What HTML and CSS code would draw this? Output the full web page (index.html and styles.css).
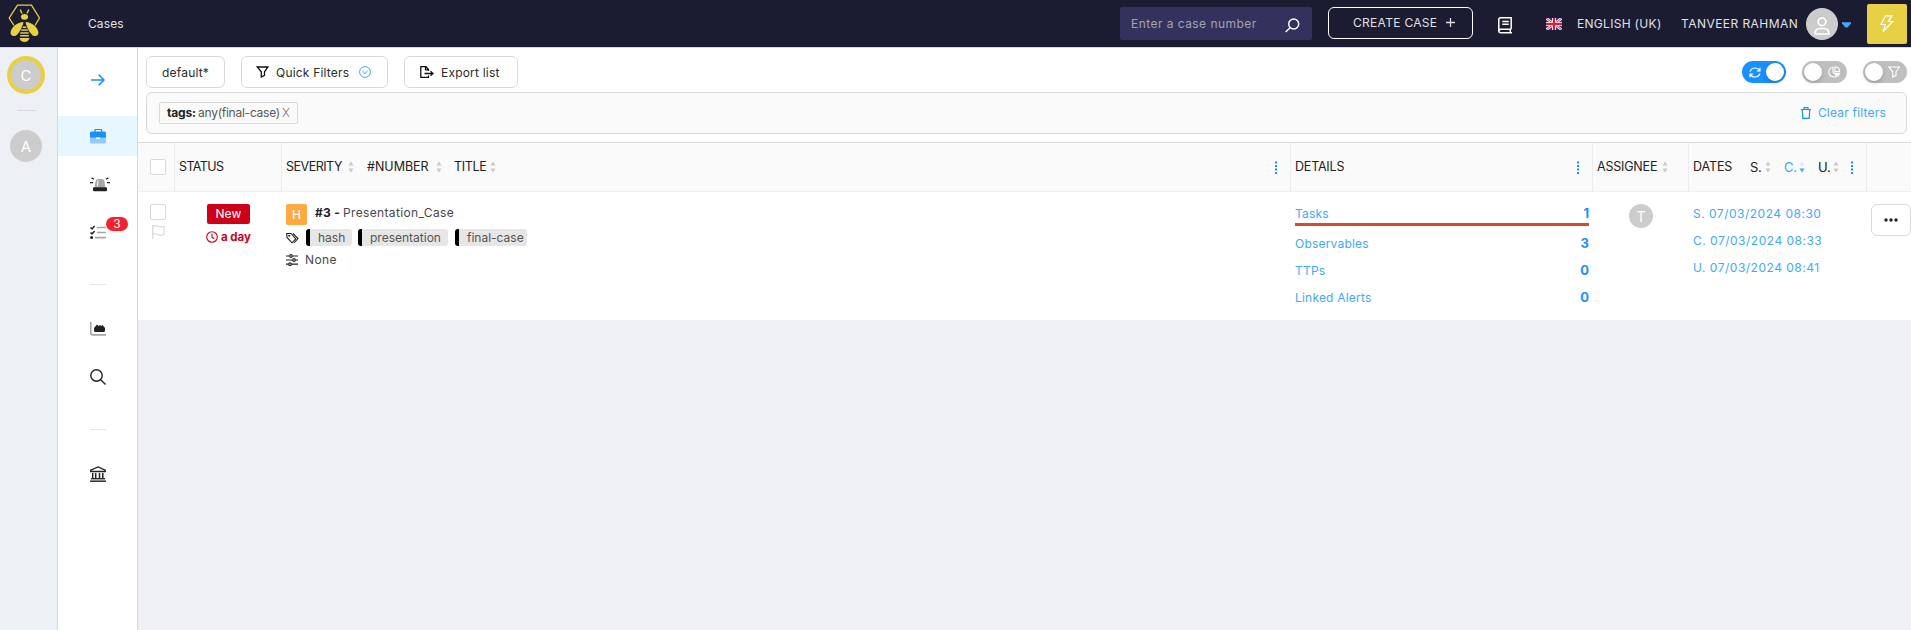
FILE: index.html
```
<!DOCTYPE html>
<html lang="en">
<head>
<meta charset="utf-8">
<title>Cases</title>
<link rel="stylesheet" href="styles.css">
</head>
<body>
<svg class="defs" width="0" height="0">
  <symbol id="sorter" viewBox="0 0 6 12"><path d="M3 0.5 5.500 4.500H.5Z"/><path d="M3 11.500 5.500 7.500H.5Z"/></symbol>
  <symbol id="sorter-desc" viewBox="0 0 6 12"><path d="M3 0.5 5.500 4.500H.5Z" fill="#d5eaff"/><path d="M3 11.500 5.500 7.500H.5Z"/></symbol>
  <symbol id="more" viewBox="0 0 2 14"><path d="M0 .5h2v2H0zM0 4h2v2H0zM0 7.500h2v2H0zM0 11h2v2H0z"/></symbol>
  <symbol id="funnel" viewBox="0 0 12 12"><path d="M.7 1h10.600L8 5.800v3.500L4.800 11V5.800Z"/></symbol>
</svg>
<header class="topbar">
  <svg class="logo" viewBox="0 0 34 40">
    <path d="M6 21.500 1.200 14 9.500 1.200H23.500L31.500 14 27 21.500" fill="none" stroke="#e8d044" stroke-width="1.300"/>
    <path d="M12.200 5.500 14 9.500M20.800 5.500 19 9.500" fill="none" stroke="#e8d044" stroke-width="1.400"/>
    <g fill="#e8d044">
      <ellipse cx="16.500" cy="12.800" rx="3.600" ry="2.900"/>
      <path d="M15.500 18C9 18.500 3.500 23 2.600 28 2 31.500 5.500 33.200 8.500 31.200 11.500 28.500 14.500 23 15.500 18ZM17.500 18C24 18.500 29.500 23 30.400 28 31 31.500 27.500 33.200 24.500 31.200 21.500 28.500 18.500 23 17.500 18Z"/>
      <path d="M15 22.500h3l.5 1.400h-4zM13.600 25.300h5.800l.8 1.500h-7.400zM12.300 28.300h8.400v1.500h-8.400zM12 31.100h9l-.3 1.400h-8.400zM11.500 34h10C20.800 36.500 19 38 16.500 38S12.200 36.500 11.500 34Z"/>
    </g>
  </svg>
  <span class="page-name">Cases</span>
  <div class="case-search"><span>Enter a case number</span>
    <svg width="15" height="15" viewBox="0 0 15 15" fill="none" stroke="#fff" stroke-width="1.400"><circle cx="8.700" cy="6" r="5"/><path d="M5 9.700.7 14"/></svg>
  </div>
  <button class="create"><span>CREATE CASE</span><svg width="9" height="9" viewBox="0 0 9 9" stroke="#ddd" stroke-width="1.300"><path d="M4.500 0v9M0 4.500h9"/></svg></button>
  <svg class="book" width="14" height="17" viewBox="0 0 14 17" fill="none" stroke="#fff" stroke-width="1.500"><path d="M13.200 12.200V.8H2.600Q.8.800.8 2.600V14Q.8 15.700 2.600 15.700H14M1 14q0-1.800 1.800-1.800H13.200M12.300 12.200v3.500M4.300 4.400h6.500M4.300 7.300h6.500"/></svg>
  <svg class="uk" width="16" height="12" viewBox="0 0 16 12"><path fill="#26347c" d="M0 0h16v12H0z"/><path d="M0 0 16 12M16 0 0 12" stroke="#fff" stroke-width="2.600"/><path d="M0 0 16 12M16 0 0 12" stroke="#d6203a" stroke-width="1"/><path d="M8 0v12M0 6h16" stroke="#fff" stroke-width="4"/><path d="M8 0v12M0 6h16" stroke="#d6203a" stroke-width="2.300"/></svg>
  <span class="language">ENGLISH (UK)</span>
  <span class="user">TANVEER RAHMAN</span>
  <span class="avatar"><svg width="16" height="18" viewBox="0 0 16 18" fill="none" stroke="#fff" stroke-width="1.700"><circle cx="8" cy="4.800" r="3.800"/><path d="M1 17q0-5.500 5-5.500h4q5 0 5 5.500Z"/></svg></span>
  <svg class="caret" width="9" height="6" viewBox="0 0 9 6"><path fill="#40a9ff" d="M0 .2h9v1.300L5.500 5.500h-2L0 1.500Z"/></svg>
  <span class="bolt"><svg width="14" height="18" viewBox="0 0 14 18" fill="none" stroke="#fff" stroke-width="1.200"><path d="M5.500.8 1 9.500h4.500L3 16.800 12.600 6.500H8.300L12 .8Z"/></svg></span>
</header>
<div class="shell">
  <aside class="orgs">
    <span class="org current">C</span>
    <i></i>
    <span class="org">A</span>
  </aside>
  <nav class="menu">
    <a class="expand"><svg width="14" height="12" viewBox="0 0 14 12" fill="none" stroke="#1890ff" stroke-width="1.500"><path d="M0 6h13M7.700.6 13 6 7.700 11.400"/></svg></a>
    <a class="active"><svg width="16" height="16" viewBox="0 0 16 16"><path d="M5 4V1.500h6.500V4" fill="none" stroke="#1890ff" stroke-width="1.200"/><path fill="#91caff" d="M0 9h16v5q0 1.500-1.500 1.500h-13Q0 15.500 0 14Z"/><path fill="#1890ff" d="M1.500 3.500h13Q16 3.500 16 5v4.500H0V5Q0 3.500 1.500 3.500Z"/><path fill="#fff" d="M6 9.500h4v1.500H6z"/></svg></a>
    <a><svg class="siren" width="20" height="15" viewBox="0 0 20 15"><path fill="#a6a6a6" d="M4.800 10.500 5.500 4.500Q6 2 8 2h4q2 0 2.500 2.500L15.200 10.500Z"/><path d="M8 3.500 7.300 9.500" stroke="#fff"/><rect x="3" y="10.300" width="14" height="4" rx="1" fill="#222"/><path d="M1.500 .8 4 2.300M0 5.700h3M18.500 .8 16 2.300M17 5.700h3" stroke="#222" stroke-width="1.300"/></svg></a>
    <a class="todo"><svg width="16" height="15" viewBox="0 0 16 15"><path d="M.5 2.500 2 4 4.600 1M.5 7.500 2 9 4.600 6" fill="none" stroke="#222" stroke-width="1.500"/><circle cx="1.600" cy="12.600" r="1.500" fill="#222"/><path d="M7 2.500h9M7 7.500h9M5 12.700h11" stroke="#a6a6a6" stroke-width="1.700"/></svg><b>3</b></a>
    <i></i>
    <a><svg width="16" height="14" viewBox="0 0 16 14"><path d="M.8 0V11q0 1.900 2 1.900H16" fill="none" stroke="#a6a6a6" stroke-width="1.600"/><path fill="#222" d="M4 9V6l3-3.500L8.500 4 10 3l1 1 1.500-1L15 6v2.500q0 1.500-1.500 1.500h-8Q4 10 4 9Z"/></svg></a>
    <a><svg width="16" height="16" viewBox="0 0 16 16" fill="none" stroke="#222" stroke-width="1.400"><circle cx="6.500" cy="6.500" r="5.700"/><path d="m10.700 10.700 4.800 4.800"/></svg></a>
    <i></i>
    <a><svg width="16" height="16" viewBox="0 0 16 16"><path d="M.7 5.500V4.200L8 1l7.300 3.200V5.500Z" fill="none" stroke="#222" stroke-width="1.300"/><path d="M2.700 7v5.500M5.700 7v5.500M9.500 7v5.500M12.800 7v5.500" stroke="#222" stroke-width="1.500"/><path d="M1 12.500h14" stroke="#222"/><path d="M1 13.600h14" stroke="#a6a6a6" stroke-width="1.300"/><path d="M0 15.200h16" stroke="#222" stroke-width="1.400"/></svg></a>
  </nav>
  <main>
    <div class="toolbar">
      <button class="view"><span>default*</span></button>
      <button class="quick"><svg class="ico" width="13" height="12"><use href="#funnel"/></svg><span>Quick Filters</span>
        <svg width="12" height="12" viewBox="0 0 12 12" fill="none" stroke="#40a9ff"><circle cx="6" cy="6" r="5.400"/><path d="M3.300 5 6 7.600 8.700 5"/></svg></button>
      <button class="export"><svg width="14" height="12" viewBox="0 0 14 12" fill="none" stroke="#111" stroke-width="1.300"><path d="M8.500 5V3.500L6 .7H.8v10.600h7.700V9.500M5.500.8v3h3M4.500 7.500h8.300M10.500 5.200l2.500 2.300-2.500 2.300"/></svg><span>Export list</span></button>
      <div class="switches">
        <span class="switch on"><svg width="12" height="11" viewBox="0 0 12 11" fill="none" stroke="#fff" stroke-width="1.200"><path d="M1 4.500Q2.500 1 6 1t4.500 2.800M11 .8v3.200H7.800M11 6.500Q9.500 10 6 10T1.500 7.200M1 10.200V7h3.200"/></svg><i></i></span>
        <span class="switch pie"><i></i><svg width="13" height="12" viewBox="0 0 13 12" fill="none" stroke="#fff" stroke-width="1.100"><path d="M5 1.200Q.8 2 .8 6T5 10.800Q7.500 11.500 9 10L5 6ZM7 .8v4.700h4.500Q11.500 1.200 7 .8M8 7.200h3.500L10.500 9.500Z"/></svg></span>
        <span class="switch"><i></i><svg width="12" height="12" class="white"><use href="#funnel"/></svg></span>
      </div>
    </div>
    <div class="filterbar">
      <span class="filter"><b>tags:</b><span>any(final-case)</span><em>X</em></span>
      <a class="clear"><svg width="10" height="12" viewBox="0 0 10 12" fill="none" stroke="#1890ff" stroke-width="1.200"><path d="M0 2.500h10M3 2.500V.6h4v1.900M1.300 2.500l.5 8.900h6.400l.5-8.900"/></svg><span>Clear filters</span></a>
    </div>
    <section class="table">
      <div class="row head">
        <div><span class="box"></span></div>
        <div><span class="h status">STATUS</span></div>
        <div><span class="h sev">SEVERITY</span><svg class="sort"><use href="#sorter"/></svg><span class="h num">#NUMBER</span><svg class="sort"><use href="#sorter"/></svg><span class="h tit">TITLE</span><svg class="sort"><use href="#sorter"/></svg><svg class="more"><use href="#more"/></svg></div>
        <div><span class="h det">DETAILS</span><svg class="more"><use href="#more"/></svg></div>
        <div><span class="h asg">ASSIGNEE</span><svg class="sort"><use href="#sorter"/></svg></div>
        <div><span class="h dat">DATES</span><span class="h one">S.</span><svg class="sort"><use href="#sorter"/></svg><span class="h one blue">C.</span><svg class="sort desc"><use href="#sorter-desc"/></svg><span class="h one">U.</span><svg class="sort"><use href="#sorter"/></svg><svg class="more"><use href="#more"/></svg></div>
        <div></div>
      </div>
      <div class="row item">
        <div class="pick"><span class="box"></span><svg width="13" height="14" viewBox="0 0 13 14" fill="none" stroke="#d9d9d9" stroke-width="1.200"><path d="M.7 0v14M.7 1.300Q3.500 0 6 1.300T12 1.300V9.500Q8.500 11 6 9.500T.7 9.500"/></svg></div>
        <div class="state"><span class="new">New</span><span class="age"><svg width="12" height="12" viewBox="0 0 12 12" fill="none" stroke="#ce0019" stroke-width="1.100"><circle cx="6" cy="6" r="5.300"/><path d="M6 2.500V6.300L8.200 7.800"/></svg><b>a day</b></span></div>
        <div class="info">
          <div class="title"><span class="level">H</span><b>#3 -</b><span class="name">Presentation_Case</span></div>
          <div class="tags"><svg width="13" height="12" viewBox="0 0 13 12" fill="none" stroke="#222" stroke-width="1.100"><path d="M.7 1.500 1 5.500 6 10.800 9.800 7 5 1.500ZM7 1.500 12 6.500 8 11"/><circle cx="3.200" cy="3.800" r=".5"/></svg><span class="chip c1">hash</span><span class="chip c2">presentation</span><span class="chip c3">final-case</span></div>
          <div class="fields"><svg width="12" height="12" viewBox="0 0 12 12" fill="none" stroke="#222" stroke-width="1.200"><path d="M0 2h3.500M6.500 2H12M0 6h6.500M9.500 6H12M0 10.200h2.500M5.500 10.200H12"/><circle cx="5" cy="2" r="1.300"/><circle cx="8" cy="6" r="1.300"/><circle cx="4" cy="10.200" r="1.300"/></svg><span>None</span></div>
        </div>
        <div class="counts">
          <p class="late"><span>Tasks</span><b>1</b></p>
          <p><span>Observables</span><b>3</b></p>
          <p><span>TTPs</span><b>0</b></p>
          <p><span>Linked Alerts</span><b>0</b></p>
        </div>
        <div class="who"><span>T</span></div>
        <div class="dates"><p>S. 07/03/2024 08:30</p><p>C. 07/03/2024 08:33</p><p>U. 07/03/2024 08:41</p></div>
        <div class="act"><button><svg width="14" height="4" viewBox="0 0 14 4" fill="#222"><circle cx="2" cy="2" r="1.700"/><circle cx="7" cy="2" r="1.700"/><circle cx="12" cy="2" r="1.700"/></svg></button></div>
      </div>
    </section>
  </main>
</div>
</body>
</html>
```
FILE: styles.css
```
* { box-sizing: border-box; }
body { margin: 0; height: 630px; overflow: hidden; background: #f0f1f6; color: #484848; font: 12px/18px Inter, "Open Sans", sans-serif; }
svg { display: block; flex: none; }
.defs { position: absolute; }
button { display: flex; align-items: center; height: 32px; padding: 0; background: #fff; border: 1px solid #d9d9d9; border-radius: 6px; font: inherit; color: #2b2b2b; }
span, b { flex: none; white-space: nowrap; }
p { margin: 0; }

.topbar { display: flex; align-items: center; height: 48px; padding: 0 4px 1px 8px; background: #1b1b32; border-bottom: 1px solid #d9d9d9; color: #e0e0e5; }
.logo { width: 34px; height: 40px; margin-top: 1px; }
.page-name { margin: 2px auto 0 46px; letter-spacing: .1px; }
.case-search { display: flex; align-items: center; justify-content: space-between; width: 192px; height: 33px; padding: 2px 12px 0 11px; background: #32325d; border-radius: 2px; color: #a5a3ac; letter-spacing: .3px; }
.case-search span { letter-spacing: .45px; }
.case-search svg { margin-top: 2px; }
.create { width: 145px; margin-left: 16px; padding-left: 24px; background: none; border-color: #fff; color: #e0e0e5; }
.create span { width: 93px; text-align: left; letter-spacing: .3px; }
.create svg { margin-top: -2px; }
.book { margin: 5px 0 0 25px; }
.uk { margin: 1px 15px 0 34px; }
.language { width: 104px; margin-top: 1px; letter-spacing: .3px; }
.user { width: 125px; margin-top: 1px; letter-spacing: .45px; }
.avatar { display: flex; justify-content: center; align-items: flex-end; width: 32px; height: 32px; padding-bottom: 5px; border-radius: 50%; background: #ccc; margin-top: 2px; }
.caret { margin: 3px 16px 0 4px; }
.bolt { display: grid; place-items: center; width: 40px; height: 40px; margin-top: 2px; border-radius: 2px; background: #e8d044; }

.shell { display: flex; height: 582px; }
.orgs { display: flex; flex-direction: column; align-items: center; width: 58px; padding: 11px 5px 0 0; background: #edf1f5; border-right: 1px solid #d9d9d9; }
.org { display: grid; place-items: center; width: 32px; height: 32px; border-radius: 50%; background: #ccc; color: #fff; font-size: 15px; }
.orgs .org { padding-top: 1px; }
.current { box-shadow: 0 0 0 3px #e8d044; border: 1px solid #e8d044; }
.orgs i { width: 19px; height: 1px; margin: 19px 0; background: #d9d9d9; }
.menu { display: flex; flex-direction: column; align-items: center; width: 80px; background: #fff; border-right: 1px solid #d9d9d9; }
.menu a { display: grid; place-items: center; width: 100%; height: 40px; margin-bottom: 8px; }
.menu .expand { height: 64px; margin-bottom: 4px; }
.menu .active { background: #e6f7ff; }
.menu i { width: 16px; height: 1px; margin: 24px 0; background: #e6e6e6; }
.siren { margin-left: 4px; }
.todo { position: relative; }
.todo b { position: absolute; left: 48px; top: 5px; width: 22px; height: 14px; border-radius: 7px; background: #f5222d; color: #fff; font-weight: 400; line-height: 14px; text-align: center; }

main { flex: 1; min-width: 0; background: linear-gradient(#fff 100px, #f0f1f6 100px); }
.toolbar { display: flex; gap: 16px; height: 44px; padding: 8px 4px 0 8px; background: #fff; }
.view { width: 79px; padding-left: 15px; }
.quick { width: 147px; padding-left: 14px; }
.export { width: 114px; padding-left: 15px; }
.toolbar button span { margin-top: 1px; letter-spacing: .2px; text-align: left; }
.quick span { width: 83px; margin-left: 7px; }
.export span { margin-left: 7px; }
.ico { fill: none; stroke: #111; stroke-width: 1.300; }
.white { fill: none; stroke: #fff; stroke-width: 1.100; }
.switches { display: flex; gap: 16px; margin: 5px 0 0 auto; }
.switch { display: flex; align-items: center; justify-content: space-between; width: 44px; height: 22px; padding: 0 7px 0 2px; border-radius: 11px; background: #bfbfbf; }
.switch.pie { width: 45px; padding-right: 6px; }
.switch.on { padding: 0 2px 0 7px; background: #1890ff; }
.switch i { width: 18px; height: 18px; border-radius: 50%; background: #fff; box-shadow: 0 2px 4px rgba(0,35,11,.2); }
.filterbar { display: flex; align-items: center; justify-content: space-between; height: 42px; margin: 0 4px 0 8px; padding: 0 20px 0 12px; background: #fafafa; border: 1px solid #d9d9d9; border-radius: 6px; }
.filter { display: flex; align-items: center; width: 139px; height: 22px; padding-left: 7px; border: 1px solid #d9d9d9; border-radius: 2px; color: #595959; }
.filter b { width: 31px; color: #222; letter-spacing: -.2px; }
.filter span { width: 84px; letter-spacing: -.25px; }
.filter em { font-style: normal; font-weight: 300; color: #777; }
.clear { display: flex; align-items: center; gap: 7px; color: #40a9ff; letter-spacing: .2px; }

.table { margin-top: 8px; border-top: 1px solid #d9d9d9; background: #fff; }
.row { display: grid; grid-template-columns: 37px 107px 1009px 302px 96px 178px 1fr; }
.head { height: 49px; background: #fafafa; border-bottom: 1px solid #f0f0f0; }
.head > div { display: flex; align-items: center; padding: 0 13px 0 4px; border-right: 1px solid #ececec; }
.head > div:first-child { padding: 0 0 0 12px; }
.head > div:last-child { border: 0; }
.box { width: 16px; height: 16px; border: 1px solid #d9d9d9; border-radius: 2px; background: #fff; }
.h { color: #222; font-size: 13px; letter-spacing: -.65px; }
.status { letter-spacing: -.6px; }
.sev { width: 62px; letter-spacing: -.5px; }
.num { width: 69px; margin-left: 13px; letter-spacing: 0; }
.tit { width: 36px; margin-left: 12px; letter-spacing: -.35px; }
.det { letter-spacing: -.2px; }
.asg { width: 65px; letter-spacing: -.2px; }
.det, .status, .sev, .asg, .num, .tit, .dat { font-size: 12.500px; }
.dat { width: 57px; letter-spacing: -.1px; }
.one { width: 15px; letter-spacing: -.3px; }
.sort + .one { margin-left: 13px; }
.blue { color: #40a9ff; }
.sort { width: 6px; height: 12px; fill: #c8c8c8; }
.desc { fill: #40a9ff; }
.more { width: 2px; height: 14px; margin: 1px 0 0 auto; fill: #1890ff; }
.item { height: 128px; }
.pick { padding: 12px 0 0 12px; }
.pick .box { display: block; }
.pick svg { margin: 5px 0 0 2px; }
.state { display: flex; flex-direction: column; align-items: center; padding: 12px 0 0 0; }
.new { width: 43px; height: 20px; background: #ce0019; border-radius: 2px; color: #fff; line-height: 20px; text-align: center; letter-spacing: .2px; }
.age { display: flex; align-items: center; gap: 3px; margin-top: 4px; color: #ce0019; font-size: 11.500px; }
.info { padding: 12px 0 0 4px; }
.title { display: flex; align-items: center; height: 21px; }
.level { width: 21px; height: 21px; border-radius: 2px; background: #ffa940; color: #fff; font-weight: 500; line-height: 21px; text-align: center; }
.title b { width: 28px; margin: -3px 0 0 8px; color: #222; letter-spacing: .3px; }
.name { margin-top: -3px; letter-spacing: .35px; }
.tags, .fields { display: flex; align-items: center; height: 17px; margin-top: 4px; }
.chip { height: 17px; padding-left: 8px; border-left: 4px solid #000; border-radius: 3px; background: #e6e6e6; color: #555; line-height: 17px; }
.c1 { width: 46px; margin-left: 7px; }
.c2 { width: 90px; margin-left: 6px; }
.c3 { width: 72px; margin-left: 7px; }
.fields { margin-top: 5px; }
.fields span { margin-left: 7px; letter-spacing: .4px; }
.counts { padding: 12px 3px 0 4px; color: #40a9ff; }
.counts p { display: flex; justify-content: space-between; height: 18px; margin-bottom: 9px; letter-spacing: .2px; }
.counts .late { height: 22px; margin: 0 1px 8px 0; border-bottom: 3px solid #d84a33; }
.counts p:not(.late) { padding-right: 1px; }
.counts span { margin-top: 1px; }
.counts b { color: #1890ff; font-size: 13px; letter-spacing: 0; }
.who { padding: 12px 0 0 36px; }
.who span { display: block; width: 24px; height: 24px; border-radius: 50%; background: #ccc; color: #fff; font-size: 14px; line-height: 25px; text-align: center; }
.dates { padding: 13px 0 0 4px; color: #40a9ff; letter-spacing: .5px; }
.dates p { height: 18px; margin-bottom: 9px; white-space: nowrap; }
.act { padding: 12px 0 0 4px; }
.act button { justify-content: center; width: 40px; }
```
